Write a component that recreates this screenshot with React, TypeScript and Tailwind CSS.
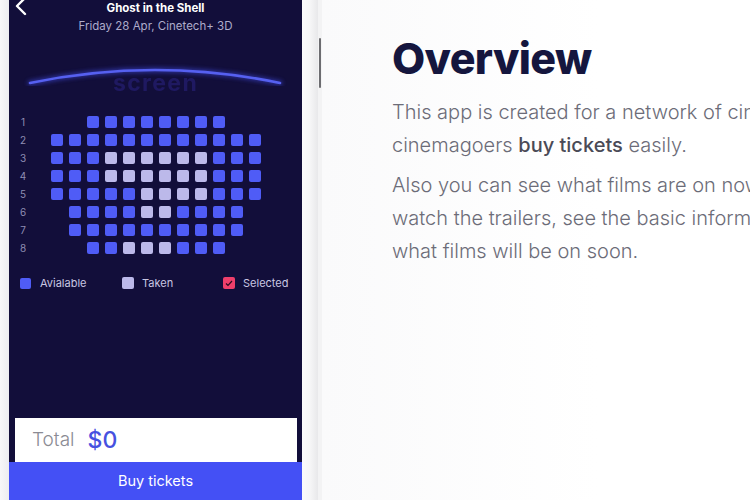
import React from "react";

type S = 0 | 1 | 2; // 0 empty, 1 available, 2 taken

const rowsSpec: string[] = [
  "001111111100",
  "111111111111",
  "111222222111",
  "111222222111",
  "111112222111",
  "011112211110",
  "011111111110",
  "001122211100",
];

function Seat({ s }: { s: S }) {
  if (s === 0) return <div className="w-[12px] h-[12px]" />;
  if (s === 1) return <div className="w-[12px] h-[12px] rounded-[2px] bg-[#4f5cf6]" />;
  return <div className="w-[12px] h-[12px] rounded-[2px] bg-[#bcb9ea]" />;
}

export default function App() {
  return (
    <div
      className="w-[750px] h-[500px] flex overflow-hidden bg-white"
      style={{ fontFamily: "Inter, 'Liberation Sans', sans-serif" }}
    >
      {/* phone left bezel */}
      <div className="w-[9px] h-full bg-gradient-to-r from-[#f7f7f9] to-[#ececf0] shrink-0" />
      {/* phone screen */}
      <div className="w-[293px] h-full bg-[#120e3a] flex flex-col shrink-0">
        {/* header */}
        <div className="relative h-[60px]">
          <svg className="absolute left-[5px] -top-[3px]" width="14" height="20" viewBox="0 0 14 20">
            <path d="M11 1 L3 9 L11 17" fill="none" stroke="#fff" strokeWidth="2.4" strokeLinecap="round" strokeLinejoin="round" />
          </svg>
          <div className="text-center text-white font-bold text-[11.5px] leading-[16px] pt-0">Ghost in the Shell</div>
          <div className="text-center text-[#aeacca] text-[11.5px] leading-[16px] mt-[2px]">Friday 28 Apr, Cinetech+ 3D</div>
        </div>
        {/* screen arc */}
        <div className="flex flex-col items-center">
          <svg width="293" height="26" viewBox="0 0 293 26" className="block">
            <defs>
              <filter id="glow" x="-10%" y="-100%" width="120%" height="300%">
                <feGaussianBlur stdDeviation="2" />
              </filter>
            </defs>
            <path d="M21 23 Q146 -3 271 23" fill="none" stroke="#3d47d8" strokeWidth="5" strokeLinecap="round" filter="url(#glow)" opacity="0.6" />
            <path d="M21 23 Q146 -3 271 23" fill="none" stroke="#5660f0" strokeWidth="2.6" strokeLinecap="round" />
          </svg>
          <div className="-mt-[14px] text-[23px] leading-[22px] font-bold tracking-[0.06em] text-[#211b66] opacity-90">screen</div>
        </div>
        {/* seats */}
        <div className="mt-[19px] flex flex-col">
          {rowsSpec.map((r, i) => (
            <div key={i} className="flex items-center h-[18px]">
              <div className="w-[28px] text-center text-[10px] text-[#8f8db3]">{i + 1}</div>
              <div className="ml-[14px] flex gap-[6px]">
                {r.split("").map((c, j) => (
                  <Seat key={j} s={Number(c) as S} />
                ))}
              </div>
            </div>
          ))}
        </div>
        {/* legend */}
        <div className="mt-[18px] flex items-center pl-[11px] text-[11px] text-[#c9c7e2]">
          <div className="w-[102px] flex items-center">
            <div className="w-[11px] h-[11px] rounded-[2px] bg-[#4f5cf6]" />
            <span className="ml-[9px]">Avialable</span>
          </div>
          <div className="w-[101px] flex items-center">
            <div className="w-[12px] h-[12px] rounded-[2px] bg-[#bcb9ea]" />
            <span className="ml-[8px]">Taken</span>
          </div>
          <div className="flex items-center">
            <div className="w-[12px] h-[12px] rounded-[2px] bg-[#ef3f6b] flex items-center justify-center">
              <svg width="8" height="7" viewBox="0 0 8 7">
                <path d="M1 3.5 L3 5.5 L7 1" fill="none" stroke="#2a0a20" strokeWidth="1.2" />
              </svg>
            </div>
            <span className="ml-[8px]">Selected</span>
          </div>
        </div>
        <div className="flex-1" />
        {/* total */}
        <div className="ml-[6px] mr-[5px] h-[44px] bg-white flex items-center pl-[17px]">
          <span className="text-[19px] text-[#8b8b93] font-light">Total</span>
          <span className="ml-[13px] text-[23px] text-[#4651e0] font-medium">$0</span>
        </div>
        <div className="h-[38px] bg-[#4450f5] flex items-center justify-center text-white text-[14.5px]">
          Buy tickets
        </div>
      </div>
      {/* right bezel */}
      <div className="w-[16px] h-full shrink-0 bg-gradient-to-r from-[#fbfbfc] via-[#f6f6f7] to-[#e8e8ea]" />
      {/* side strip with button */}
      <div className="w-[4px] h-full shrink-0 bg-[#f3f3f4] flex flex-col items-center">
        <div className="mt-[38px] w-[2px] h-[50px] bg-[#6c6c70] rounded-[1px]" />
      </div>
      {/* content */}
      <div className="flex-1 bg-gradient-to-r from-[#fafafb] via-white to-white pl-[70px] pt-[31px] whitespace-nowrap">
        <div className="text-[43px] leading-[54px] font-extrabold text-[#15163e] tracking-[-0.015em]">Overview</div>
        <div className="mt-[11px] text-[20px] leading-[33px] text-[#6c6c78] font-light">
          <div>This app is created for a network of cinemas to help</div>
          <div>
            cinemagoers <span className="font-medium text-[#4a4a56]">buy tickets</span> easily.
          </div>
          <div className="mt-[7px]">Also you can see what films are on now,</div>
          <div>watch the trailers, see the basic information and</div>
          <div>what films will be on soon.</div>
        </div>
      </div>
    </div>
  );
}
